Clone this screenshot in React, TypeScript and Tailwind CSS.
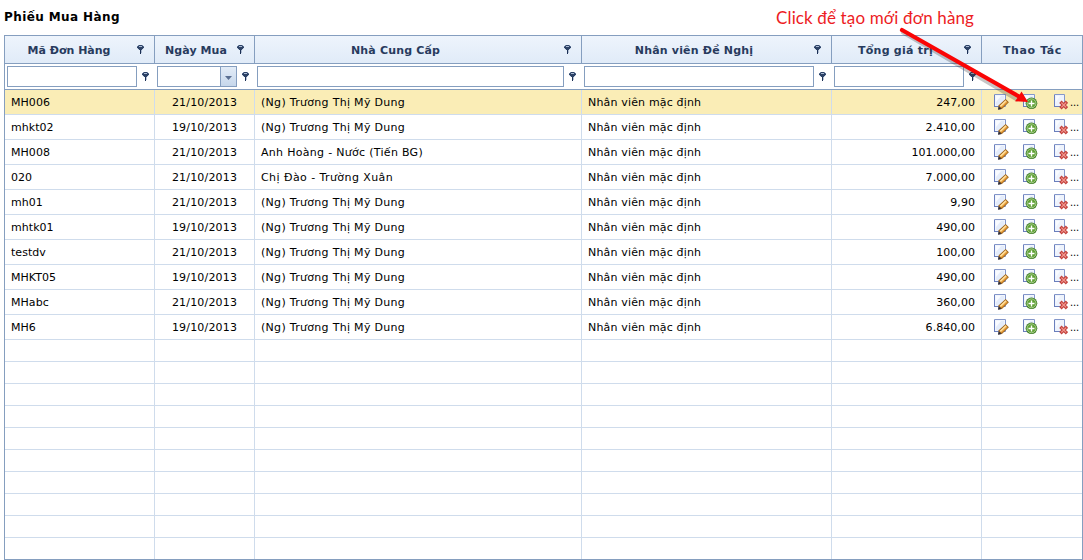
import React from "react";

type Order = { code: string; date: string; supplier: string; total: string };

const DUNG = "(Ng) Trương Thị Mỹ Dung";

const orders: Order[] = [
  { code: "MH006", date: "21/10/2013", supplier: DUNG, total: "247,00" },
  { code: "mhkt02", date: "19/10/2013", supplier: DUNG, total: "2.410,00" },
  { code: "MH008", date: "21/10/2013", supplier: "Anh Hoàng - Nước (Tiến BG)", total: "101.000,00" },
  { code: "020", date: "21/10/2013", supplier: "Chị Đào - Trường Xuân", total: "7.000,00" },
  { code: "mh01", date: "21/10/2013", supplier: DUNG, total: "9,90" },
  { code: "mhtk01", date: "19/10/2013", supplier: DUNG, total: "490,00" },
  { code: "testdv", date: "21/10/2013", supplier: DUNG, total: "100,00" },
  { code: "MHKT05", date: "19/10/2013", supplier: DUNG, total: "490,00" },
  { code: "MHabc", date: "21/10/2013", supplier: DUNG, total: "360,00" },
  { code: "MH6", date: "19/10/2013", supplier: DUNG, total: "6.840,00" },
];

const headers = [
  { label: "Mã Đơn Hàng", className: "pr-[4px]" },
  { label: "Ngày Mua", className: "tracking-[0.05px]" },
  { label: "Nhà Cung Cấp", className: "pr-[28px] tracking-[0.17px]" },
  { label: "Nhân viên Đề Nghị", className: "pr-[8px] tracking-[0.18px]" },
  { label: "Tổng giá trị", className: "pr-[5px] tracking-[0.25px]" },
];

const COLS = "grid grid-cols-[150px_100px_327px_250px_150px_101px]";

function FilterIcon() {
  return (
    <svg width="7" height="9" viewBox="0 0 7 9" className="block shrink-0">
      <path d="M1 0h5v1h1v2H6v1H5v1H2V4H1V3H0V1h1z" fill="#2d4266" />
      <path d="M0 1h1v1H0zM6 1h1v1H6z" fill="#5f7496" />
      <path d="M1 0h1v1H1zM5 0h1v1H5z" fill="#7487a6" />
      <path d="M2 1h3v1H2z" fill="#a9bad4" />
      <path d="M0 3h1v1H0zM6 3h1v1H6zM1 4h1v1H1zM5 4h1v1H5z" fill="#b9c9e0" opacity="0.6" />
      <path d="M3 5h1v4H3z" fill="#1c3055" />
      <path d="M4 5h1v3H4z" fill="#8b9bb8" opacity="0.6" />
    </svg>
  );
}

function Page() {
  return (
    <>
      <path d="M0.5 0.5h11v12h-11z" fill="#f1f5fd" stroke="#8497ca" />
      <path d="M0.5 1v12M0 12.5h11" stroke="#6a7fbd" />
      <path d="M2 2h8v9H2z" fill="#e4ecfa" />
      <path d="M2 2h5L2 8z" fill="#f9fbff" />
    </>
  );
}

function EditIcon() {
  return (
    <svg width="15" height="16" viewBox="0 0 15 16" className="block shrink-0">
      <Page />
      <path d="M4.200 15.500l.5-4.200 6.900-6.300 3.300 3.300-7 6.800z" fill="#9a6420" />
      <path d="M5.600 12l6-5.700 2.200 2-6 5.800z" fill="#e59a35" />
      <path d="M5.700 11.700l5.800-5.500 1.200 1.100-5.800 5.600z" fill="#ffdf9c" />
      <path d="M4 15.800l.7-3.300 2.600 2.500z" fill="#202b4a" />
    </svg>
  );
}

function AddIcon() {
  return (
    <svg width="15" height="16" viewBox="0 0 15 16" className="block shrink-0">
      <Page />
      <circle cx="8.5" cy="9.3" r="5.8" fill="#3f7d25" />
      <circle cx="8.5" cy="9.3" r="4.5" fill="#5fa035" stroke="#c2e2a4" strokeWidth="0.8" />
      <path d="M8.5 6.5v6M5.500 9.500h6" stroke="#fff" strokeWidth="1.4" />
    </svg>
  );
}

function DeleteIcon() {
  return (
    <svg width="14" height="16" viewBox="0 0 14 16" className="block shrink-0">
      <path d="M0.5 0.5h10v12h-10z" fill="#eef3fc" stroke="#8497ca" />
      <path d="M0.5 1v12M0 12.5h10" stroke="#6a7fbd" />
      <path d="M2 2h4L2 8z" fill="#f9fbff" />
      <path d="M7.6 8.900l4.200 4.200M11.800 8.900l-4.200 4.200" stroke="#c2423e" strokeWidth="3.400" strokeLinecap="square" />
      <path d="M7.300 8.600l4.800 4.800M12.100 8.600l-4.800 4.800" stroke="#f2978e" strokeWidth="1.300" />
    </svg>
  );
}

function FilterBox({ children }: { children?: React.ReactNode }) {
  return (
    <div className="flex border-r border-transparent pl-[2px] pr-[5px] pt-[2px]">
      <div className="flex h-[21px] flex-1 justify-end border border-[#859ebf] bg-white">{children}</div>
      <div className="pl-[5px] pt-[6px]">
        <FilterIcon />
      </div>
    </div>
  );
}

export default function App() {
  return (
    <main className="relative h-[560px] w-[1083px] overflow-hidden bg-white pl-1 font-['DejaVu_Sans',Verdana,sans-serif] text-[11px] text-black">
      <h1 className="h-[35px] pt-[8px] text-[12px] leading-[18px] font-bold tracking-[0.4px]">Phiếu Mua Hàng</h1>

      <section className="w-[1079px] border-t border-l border-[#859ebf]">
        <div className={`${COLS} h-[28px] border-b border-[#859ebf] bg-linear-to-b from-[#eef4fc] to-[#e0ebf8] font-bold text-[#283b5e]`}>
          {headers.map((h) => (
            <div key={h.label} className="flex h-[27px] border-r border-[#859ebf] pr-[10px]">
              <span className={`flex-1 text-center leading-[29px] whitespace-nowrap ${h.className}`}>{h.label}</span>
              <span className="pt-[9px]">
                <FilterIcon />
              </span>
            </div>
          ))}
          <div className="h-[27px] border-r border-[#859ebf] pl-[1px] text-center leading-[29px] tracking-[0.6px]">Thao Tác</div>
        </div>

        <div className={`${COLS} h-[26px] border-b border-[#859ebf]`}>
          <FilterBox />
          <FilterBox>
            <span className="flex w-[16px] items-center justify-center border-l border-[#859ebf] bg-linear-to-b from-[#e3ecf7] to-[#c6d7eb]">
              <svg width="7" height="4" viewBox="0 0 7 4" className="mt-[2px]">
                <path d="M0 0h7L3.5 4z" fill="#5a6f92" />
              </svg>
            </span>
          </FilterBox>
          <FilterBox />
          <FilterBox />
          <FilterBox />
          <div className="border-r border-[#859ebf]" />
        </div>

        {orders.map((o, i) => (
          <div
            key={o.code}
            className={`${COLS} h-[25px] border-b border-[#cfdcec] leading-[26px] whitespace-nowrap ${i === 0 ? "bg-[#faedb6]" : "bg-white"}`}
          >
            <div className="h-[24px] border-r border-[#cfdcec] pl-[6px] tracking-[0.05px]">{o.code}</div>
            <div className="h-[24px] border-r border-[#cfdcec] text-center tracking-[0.18px]">{o.date}</div>
            <div
              className={`h-[24px] border-r border-[#cfdcec] pl-[6px] ${o.supplier.startsWith("Chị") ? "tracking-[0.43px]" : "tracking-[0.3px]"}`}
            >
              {o.supplier}
            </div>
            <div className="h-[24px] border-r border-[#cfdcec] pl-[6px] tracking-[0.17px]">Nhân viên mặc định</div>
            <div className="h-[24px] border-r border-[#cfdcec] pr-[6px] text-right tracking-[0.05px]">{o.total}</div>
            <div className="flex h-[25px] border-r border-[#859ebf] pt-[4px] pl-[12px]">
              <EditIcon />
              <span className="ml-[14px]">
                <AddIcon />
              </span>
              <span className="ml-[16px]">
                <DeleteIcon />
              </span>
              <span className="ml-[2px] w-[10px] text-[10px] leading-[17px] tracking-[-0.18px]">...</span>
            </div>
          </div>
        ))}

        {Array.from({ length: 10 }, (_, i) => (
          <div key={i} className={`${COLS} h-[22px] border-b ${i === 9 ? "border-[#859ebf]" : "border-[#cfdcec]"}`}>
            <div className="border-r border-[#cfdcec]" />
            <div className="border-r border-[#cfdcec]" />
            <div className="border-r border-[#cfdcec]" />
            <div className="border-r border-[#cfdcec]" />
            <div className="border-r border-[#cfdcec]" />
            <div className="-mb-px border-r border-[#859ebf]" />
          </div>
        ))}
      </section>

      <p className="absolute top-[6px] left-[776px] font-['Lato','Noto_Sans',sans-serif] text-[17px] leading-[24px] tracking-[0.13px] whitespace-nowrap text-[#ed1c24]">
        Click để tạo mới đơn hàng
      </p>
      <svg width="140" height="85" viewBox="895 25 140 85" className="absolute top-[25px] left-[895px]">
        <path d="M903 32.5L1017 99.5" stroke="#333" strokeOpacity="0.28" strokeWidth="4" strokeLinecap="round" />
        <path d="M902 30L1019 96.5" stroke="#fa0505" strokeWidth="4.2" strokeLinecap="round" />
        <path d="M1028 102L1015 101.3L1018.5 96.5L1021.5 91.5Z" fill="#fa0505" />
      </svg>
    </main>
  );
}
